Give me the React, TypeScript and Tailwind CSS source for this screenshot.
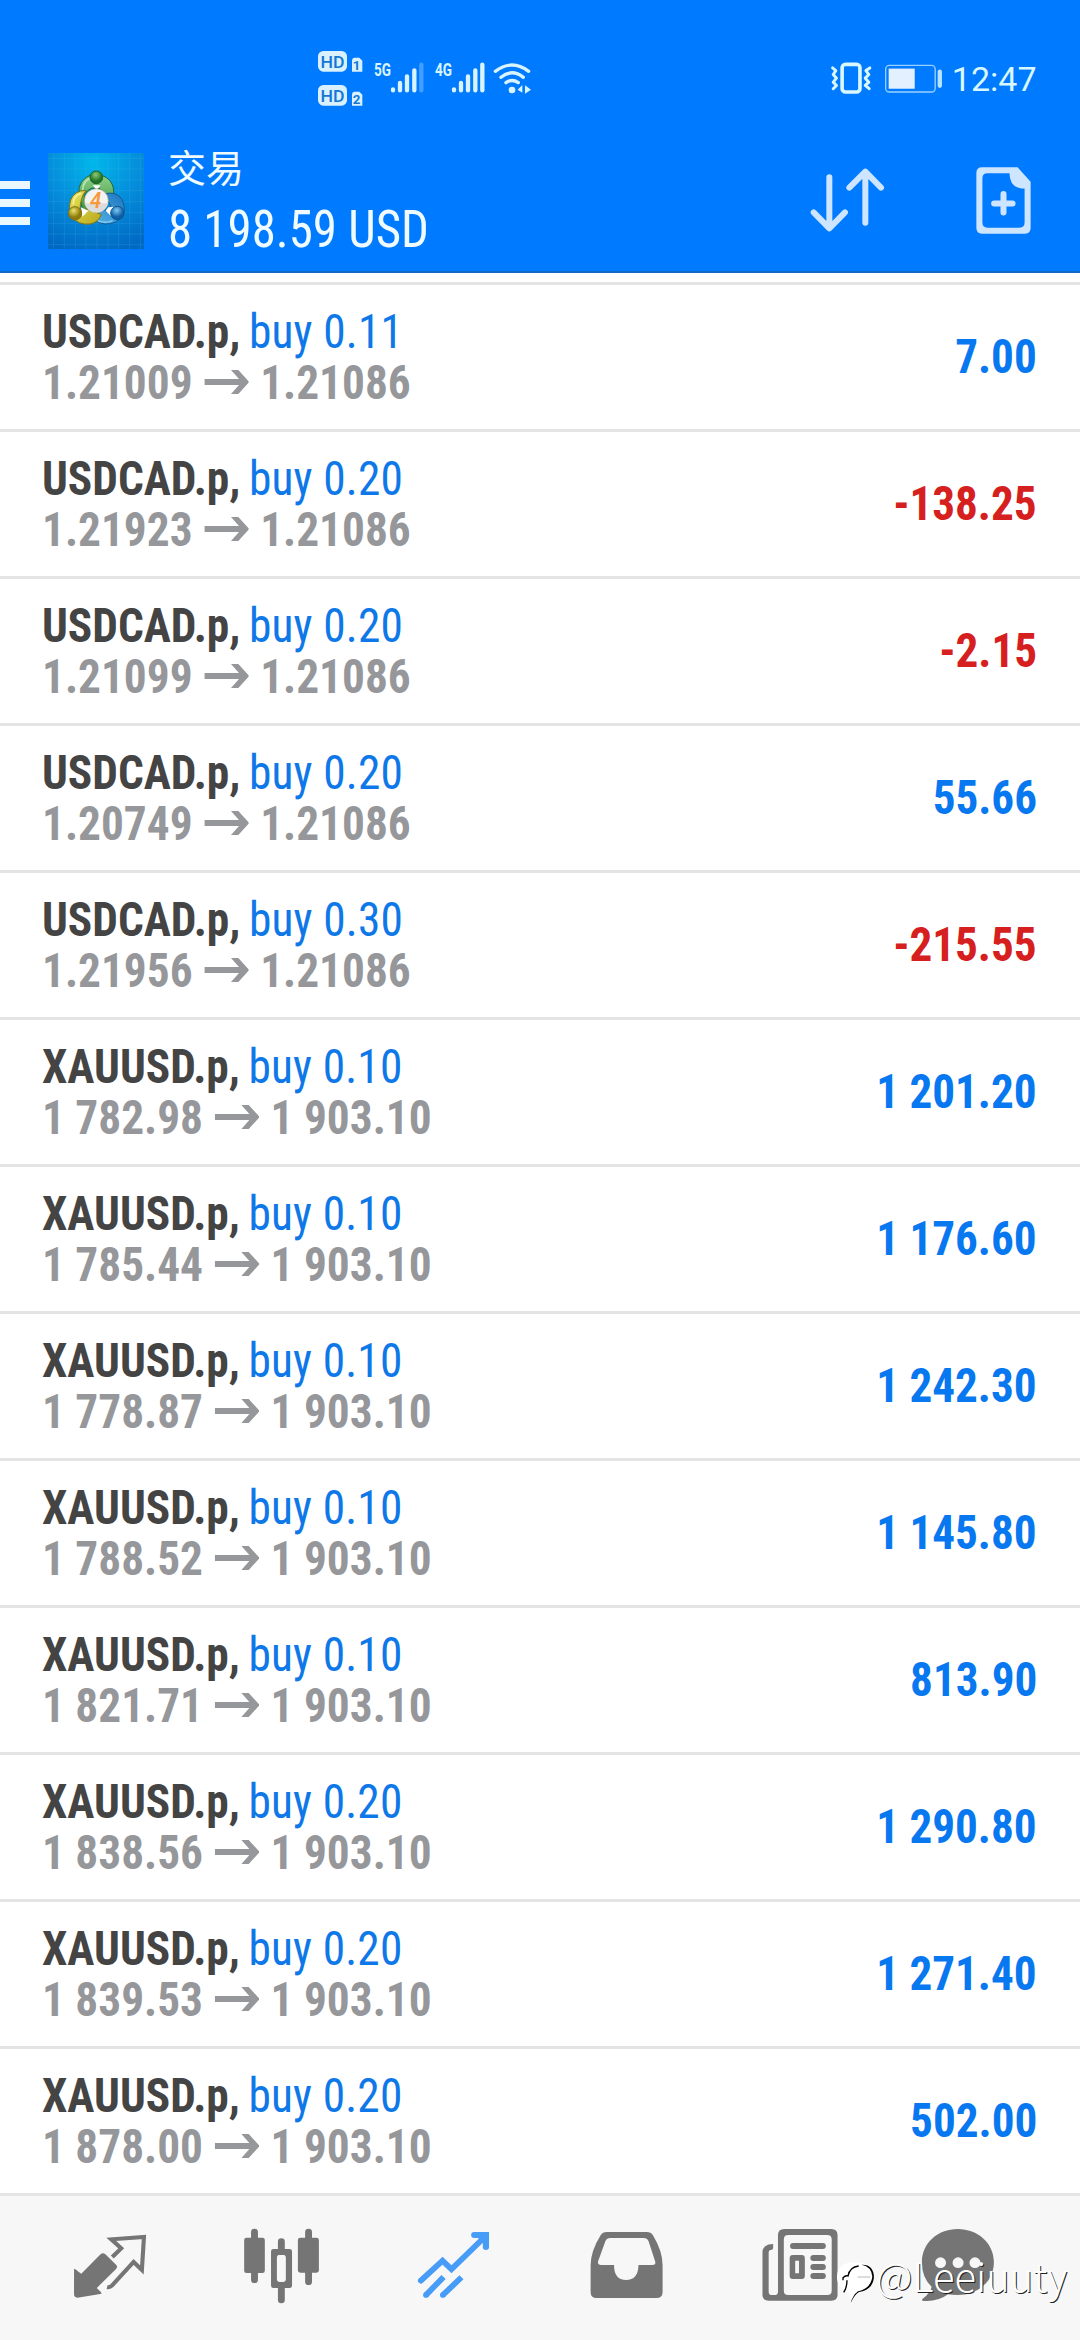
import React from "react";

type Position = { symbol: string; volume: string; open: string; current: string; profit: string };

const positions: Position[] = [
  { symbol: "USDCAD.p", volume: "0.11", open: "1.21009", current: "1.21086", profit: "7.00" },
  { symbol: "USDCAD.p", volume: "0.20", open: "1.21923", current: "1.21086", profit: "-138.25" },
  { symbol: "USDCAD.p", volume: "0.20", open: "1.21099", current: "1.21086", profit: "-2.15" },
  { symbol: "USDCAD.p", volume: "0.20", open: "1.20749", current: "1.21086", profit: "55.66" },
  { symbol: "USDCAD.p", volume: "0.30", open: "1.21956", current: "1.21086", profit: "-215.55" },
  { symbol: "XAUUSD.p", volume: "0.10", open: "1 782.98", current: "1 903.10", profit: "1 201.20" },
  { symbol: "XAUUSD.p", volume: "0.10", open: "1 785.44", current: "1 903.10", profit: "1 176.60" },
  { symbol: "XAUUSD.p", volume: "0.10", open: "1 778.87", current: "1 903.10", profit: "1 242.30" },
  { symbol: "XAUUSD.p", volume: "0.10", open: "1 788.52", current: "1 903.10", profit: "1 145.80" },
  { symbol: "XAUUSD.p", volume: "0.10", open: "1 821.71", current: "1 903.10", profit: "813.90" },
  { symbol: "XAUUSD.p", volume: "0.20", open: "1 838.56", current: "1 903.10", profit: "1 290.80" },
  { symbol: "XAUUSD.p", volume: "0.20", open: "1 839.53", current: "1 903.10", profit: "1 271.40" },
  { symbol: "XAUUSD.p", volume: "0.20", open: "1 878.00", current: "1 903.10", profit: "502.00" },
];

function HdBadge({ sim }: { sim: number }) {
  return (
    <svg viewBox="0 0 135 63" className="h-[21px] w-[45px]">
      <rect x="0" y="0" width="87" height="62" rx="16" fill="#d9f1ff" />
      <text x="43.500" y="50" fontSize="52" textAnchor="middle" textLength="72" lengthAdjust="spacingAndGlyphs" fill="#1477d6" fontFamily="Roboto" fontWeight="500">HD</text>
      <path d="M102 30q0-10 8-10h14l9 9v33h-31z" fill="#d9f1ff" />
      <text x="116" y="56" fontSize="40" textAnchor="middle" fill="#1477d6" fontFamily="Roboto" fontWeight="700">{sim}</text>
    </svg>
  );
}

function Signal({ label, dimLast }: { label: string; dimLast?: boolean }) {
  return (
    <svg viewBox="0 -24 150 120" className="-mt-2 h-10 w-[50px]">
      <text x="0" y="43" fontSize="57" textLength="51" lengthAdjust="spacingAndGlyphs" fill="#d9f4ff" fontFamily="Roboto" fontWeight="700">{label}</text>
      <g stroke="#d9f4ff" strokeWidth="13" strokeLinecap="round">
        <path d="M57 82v3M78 63v22M99 43v42M121 25v60" />
        <path d="M142 8v77" opacity={dimLast ? 0.3 : 1} />
      </g>
    </svg>
  );
}

function StatusBar() {
  return (
    <div className="flex h-[132px] justify-between pt-[42px] pl-[318px]">
      <div className="flex items-start">
        <div className="flex flex-col gap-[13px] pt-[9px]">
          <HdBadge sim={1} />
          <HdBadge sim={2} />
        </div>
        <div className="flex pt-5 pl-[11px]">
          <Signal label="5G" dimLast />
          <div className="w-[11px]" />
          <Signal label="4G" />
          <svg viewBox="578 95 114 96" className="ml-[8px] h-8 w-[38px]">
            <g fill="none" stroke="#d9f4ff" strokeWidth="10" strokeLinecap="round">
              <path d="M585 123q50-38 100 0M602 141q33-27 67 0M617 157q18-13 37 0" />
            </g>
            <circle cx="635" cy="179" r="10" fill="#d9f4ff" />
            <path d="M652 178l14-14v23zM674 165l18 13-18 12z" fill="#d9f4ff" />
          </svg>
        </div>
      </div>
      <div className="flex items-start pr-[43.500px]">
        <svg viewBox="60 65 345 100" className="mt-[20px] h-[33px] w-[115px]">
          <g fill="none" stroke="#d9f7ff">
            <rect x="95" y="72" width="54" height="84" rx="10" strokeWidth="11" />
            <path d="M66 83l10 8-8 12 10 11-10 12 10 10-10 10M179 83l-12 8 9 12-11 11 11 12-11 10 12 10" strokeWidth="9" strokeLinecap="round" strokeLinejoin="round" />
            <rect x="227" y="75" width="150" height="81" rx="11" strokeWidth="4" opacity=".7" />
            <path d="M391 94v43" strokeWidth="13" strokeLinecap="round" opacity=".85" />
          </g>
          <rect x="236" y="85" width="79" height="61" fill="#e3f0ff" />
        </svg>
        <span className="mt-[14px] ml-[7px] font-[Roboto] text-[34px] leading-[46px] font-normal text-[#d9f7ff]">12:47</span>
      </div>
    </div>
  );
}

function AppLogo() {
  return (
    <svg viewBox="144 69 288 288" className="h-24 w-24">
      <defs>
        <radialGradient id="sky" cx=".48" cy=".1" r=".95">
          <stop offset="0" stopColor="#00b7ea" />
          <stop offset=".5" stopColor="#058ddb" />
          <stop offset="1" stopColor="#0068c3" />
        </radialGradient>
        <linearGradient id="green" x2="0" y2="1">
          <stop offset="0" stopColor="#8fd08a" />
          <stop offset="1" stopColor="#25842d" />
        </linearGradient>
        <linearGradient id="yellow" x2="1" y2="1">
          <stop offset="0" stopColor="#e9e45a" />
          <stop offset="1" stopColor="#b9a81d" />
        </linearGradient>
        <linearGradient id="blue" x1="1" x2="0" y2="1">
          <stop offset="0" stopColor="#1c74bd" />
          <stop offset="1" stopColor="#57b9ec" />
        </linearGradient>
        <radialGradient id="greenHead" cx=".45" cy=".3">
          <stop offset="0" stopColor="#8ccb72" />
          <stop offset="1" stopColor="#237429" />
        </radialGradient>
        <radialGradient id="yellowHead" cx=".4" cy=".3">
          <stop offset="0" stopColor="#ece36c" />
          <stop offset="1" stopColor="#8d7c0d" />
        </radialGradient>
        <radialGradient id="blueHead" cx=".45" cy=".3">
          <stop offset="0" stopColor="#7cc9f2" />
          <stop offset="1" stopColor="#0e5ea8" />
        </radialGradient>
      </defs>
      <path d="M144 69h288v288H144z" fill="url(#sky)" />
      <path d="M161 69v288M193 69v288M226 69v288M258 69v288M291 69v288M324 69v288M356 69v288M389 69v288M421 69v288M144 85h288M144 117h288M144 150h288M144 182h288M144 215h288M144 247h288M144 280h288M144 312h288M144 344h288" stroke="#4cc0f2" strokeWidth="2" opacity=".28" />
      <path d="M275 272C246 268 234 180 238 172C246 143 270 133 290 134C320 136 340 154 341 184Q340 205 330 216L300 176Q270 165 252 196z" fill="url(#green)" stroke="#1d6a35" strokeWidth="3" />
      <path d="M248 180Q250 148 274 145" fill="none" stroke="#c8efc6" strokeWidth="5" opacity=".8" />
      <path d="M310 192Q350 182 366 208Q379 235 367 258Q350 283 315 282Q280 278 265 245L300 235Q325 250 332 226z" fill="url(#blue)" stroke="#125a96" strokeWidth="3" />
      <path d="M285 268Q309 283 338 272" fill="none" stroke="#a5dcf7" strokeWidth="4" opacity=".7" />
      <path d="M258 181Q222 182 212 210Q204 235 216 260Q235 286 270 282Q295 277 304 254L270 238L240 240Q240 205 258 181z" fill="url(#yellow)" stroke="#83740f" strokeWidth="3" />
      <path d="M220 224Q218 197 244 190" fill="none" stroke="#fbf8b0" strokeWidth="5" opacity=".8" />
      <path d="M243 232l22 10-18 18zM325 232l20-2-12 28-16-16zM278 166h24l-12 14z" fill="#fff" />
      <circle cx="289" cy="142" r="19" fill="url(#greenHead)" stroke="#1d6329" strokeWidth="3" />
      <circle cx="225" cy="250" r="20" fill="url(#yellowHead)" stroke="#82720e" strokeWidth="3" />
      <circle cx="352" cy="249" r="20" fill="url(#blueHead)" stroke="#0e528f" strokeWidth="3" />
      <circle cx="289" cy="212" r="36" fill="#f3f3f1" stroke="#9c9e75" strokeWidth="2" />
      <path d="M254 220h70a36 36 0 0 1-70 0z" fill="#dcdcdc" />
      <text x="287" y="235" fontSize="66" fontWeight="600" fontStyle="italic" textAnchor="middle" textLength="34" lengthAdjust="spacingAndGlyphs" fill="#f6993c" fontFamily="Roboto">4</text>
    </svg>
  );
}

function Header() {
  return (
    <header className="flex h-[273px] flex-col border-b-2 border-[#1268c6] bg-[#007aff]">
      <StatusBar />
      <div className="flex flex-1">
        <div className="mt-[49px] flex w-[30px] flex-col gap-[10px]">
          <div className="h-2 bg-[#e9f8ff]" />
          <div className="h-2 bg-[#e9f8ff]" />
          <div className="h-2 bg-[#e9f8ff]" />
        </div>
        <div className="mt-[21px] ml-[18px]">
          <AppLogo />
        </div>
        <div className="ml-6 flex w-[280px] flex-col text-[#effbff]">
          <div className="mt-[7px] font-['Noto_Sans_CJK_SC',sans-serif] text-[38px] leading-[54px]">交易</div>
          <div className="mt-0.5 origin-left scale-x-[.959] font-[Roboto] text-[51px] leading-[70px] whitespace-pre [font-stretch:75%]">8 198.59 USD</div>
        </div>
        <div className="flex-1" />
        <svg viewBox="86 82 225 198" className="mt-[35px] h-[66px] w-[75px]" fill="none" stroke="#cde5ff" strokeWidth="18" strokeLinecap="round" strokeLinejoin="round">
          <path d="M144 113v152M97 218l47 48 47-48M252 249V98M204 144l48-48 47 48" />
        </svg>
        <svg viewBox="584 83 164 200" className="mt-[35px] mr-[49px] ml-[91px] h-[67px] w-[55px]">
          <path fillRule="evenodd" d="M602 84h106l39 43v138q0 17-17 17H602q-17 0-17-17v-164q0-17 17-17zm16 18q-15 0-15 15v132q0 15 15 15h96q15 0 15-15V147h-9q-36-4-36-45z" fill="#cde5ff" />
          <path d="M666 164v55M638 192h55" stroke="#cde5ff" strokeWidth="18" strokeLinecap="round" />
        </svg>
      </div>
    </header>
  );
}

function PositionRow({ p }: { p: Position }) {
  return (
    <div className="flex h-[147px] items-center justify-between border-b-[3px] border-[#e4e4e4] pr-[43px] pl-[42px] font-[Roboto] text-[48px] leading-[51px] font-bold whitespace-pre [font-stretch:75%]">
      <div className="origin-left scale-x-[.944]">
        <div className="text-[#444444]">
          {p.symbol}, <span className="-ml-[2px] font-normal tracking-[.2px] text-[#0f78e8]">buy {p.volume}</span>
        </div>
        <div className="flex items-center text-[#96979b]">
          <span>{p.open}</span>
          <svg viewBox="0 0 135 72" preserveAspectRatio="none" className="mt-[-1px] mr-3 ml-3 h-6 w-[47.600px]" fill="none" stroke="currentColor" strokeWidth="18">
            <path d="M0 36h124" />
            <path d="M80 0h22l33 36-33 36H80l32-36z" fill="currentColor" stroke="none" />
          </svg>
          <span>{p.current}</span>
        </div>
      </div>
      <div className={p.profit.startsWith("-") ? "-mt-0.5 origin-right scale-x-[.94] text-[#d62020]" : "-mt-0.5 origin-right scale-x-[.94] text-[#0878f0]"}>{p.profit}</div>
    </div>
  );
}

function NavIcon({ x, active, children }: { x: number; active?: boolean; children: React.ReactNode }) {
  return (
    <svg viewBox={`${x} 18 522.67 432`} preserveAspectRatio="none" className={active ? "h-36 w-[180px] text-[#479cf8]" : "h-36 w-[180px] text-[#757575]"} fill="currentColor">
      {children}
    </svg>
  );
}

function BottomNav() {
  return (
    <nav className="relative grid h-36 grid-cols-6 bg-[#f7f7f7]">
      <NavIcon x={0}>
        <path d="M215 236q7 2 11 8l10 7 56-58q7-7 14 0l31 31q6 6 0 13l-56 57 8 8q5 3 6 9l-70 12q-10 0-10-10z" />
        <path d="M311 291q8 2 14-4l63-71 24 24 6-99-95 7 29 27-26 26" fill="none" stroke="currentColor" strokeWidth="12" />
      </NavIcon>
      <NavIcon x={522.67}>
        <rect x="709" y="143" width="60" height="106" rx="7" />
        <rect x="865" y="143" width="61" height="105" rx="7" />
        <path d="M739 126v143M896 126v149M817 155v30M817 290v40" stroke="currentColor" strokeWidth="20" strokeLinecap="round" />
        <path fillRule="evenodd" d="M794 177h47q7 0 7 7v103q0 7-7 7h-47q-7 0-7-7V184q0-7 7-7zm19 17q-9 0-9 9v64q0 9 9 9h8q9 0 9-9v-64q0-9-9-9z" />
      </NavIcon>
      <NavIcon x={1045.33} active>
        <g fill="none" stroke="currentColor" strokeWidth="17">
          <path d="M1222 272l63-60 26 26 100-101" strokeLinecap="round" />
          <path d="M1377 135h34v36" strokeLinecap="round" strokeWidth="18" />
          <path d="M1237 315l51-54M1286 315l54-53" />
        </g>
        <circle cx="1237" cy="315" r="8.500" />
        <circle cx="1286" cy="315" r="8.500" />
        <path d="M1388 144h24v24z" />
      </NavIcon>
      <NavIcon x={0}>
        <path fillRule="evenodd" d="M194 126h116q12 0 18 10 28 48 28 90v80q0 18-18 18H164q-17 0-17-18v-80q0-42 29-90 6-10 18-10zm10 18q-10 0-14 9l-21 60q-3 12 8 12h38q0 45 35 45t36-45h40q12 0 8-12l-19-60q-4-9-14-9z" />
      </NavIcon>
      <NavIcon x={522.67}>
        <path fillRule="evenodd" d="M709 117h137q18 0 18 18v180q0 17-18 17H664q-18 0-18-17V188q0-26 31-26v11q0 7-7 7-6 0-6 7v118q0 10 10 10h7q10 0 10-10V135q0-18 18-18zm12 18q-13 0-13 13v154q0 13 13 13h113q13 0 13-13V148q0-13-13-13z" />
        <path fillRule="evenodd" d="M734 195h26q9 0 9 9v54q0 9-9 9h-26q-9 0-9-9v-54q0-9 9-9zm7 17v38h11v-38z" />
        <path d="M735 168h86M794 204h27M794 231h27M794 258h27" stroke="currentColor" strokeWidth="18" strokeLinecap="round" />
      </NavIcon>
      <NavIcon x={1045.33}>
        <path d="M1213 117c58 0 105 42 105 100s-47 98-105 98q-18 0-28-2-31 23-70 20-9-1-4-7 25-20 26-36-28-26-28-73c0-58 46-100 104-100z" />
        <g fill="#f7f7f7">
          <circle cx="1163" cy="218" r="16" />
          <circle cx="1214" cy="218" r="16" />
          <circle cx="1263" cy="218" r="16" />
        </g>
      </NavIcon>
      <div className="absolute top-14 right-[13px] flex text-white">
        <svg viewBox="20 62 117 129" className="mt-[9px] h-[43px] w-[39px]">
          <path d="M73 66q56 0 56 46 0 38-42 46-10 6-22 22l-12-24q-33-14-33-45 0-45 53-45z" fill="#fff" />
          <path d="M94 73q34-2 37 36-3 40-45 46-14 8-25 34 6-24 22-36 38-8 43-44-2-30-32-36z" fill="#000" />
          <path d="M38 120v-8q8-8 15-5 5-27 32-30M50 120q0 22-10 36" fill="none" stroke="#000" strokeWidth="4" />
          <path d="M82 110h38" stroke="#999" strokeWidth="2" />
        </svg>
        <span className="font-['Noto_Sans_CJK_SC',sans-serif] text-[40px] leading-[46px] font-light [text-shadow:1px_1px_0_#222]">@Leeiuuty</span>
      </div>
    </nav>
  );
}

export default function App() {
  return (
    <div className="flex h-[2340px] w-[1080px] flex-col overflow-hidden bg-white">
      <Header />
      <main className="flex h-[1923px] flex-col">
        <div className="h-3 border-b-[3px] border-[#e4e4e4]" />
        {positions.map((p, i) => (
          <PositionRow key={i} p={p} />
        ))}
      </main>
      <BottomNav />
    </div>
  );
}
